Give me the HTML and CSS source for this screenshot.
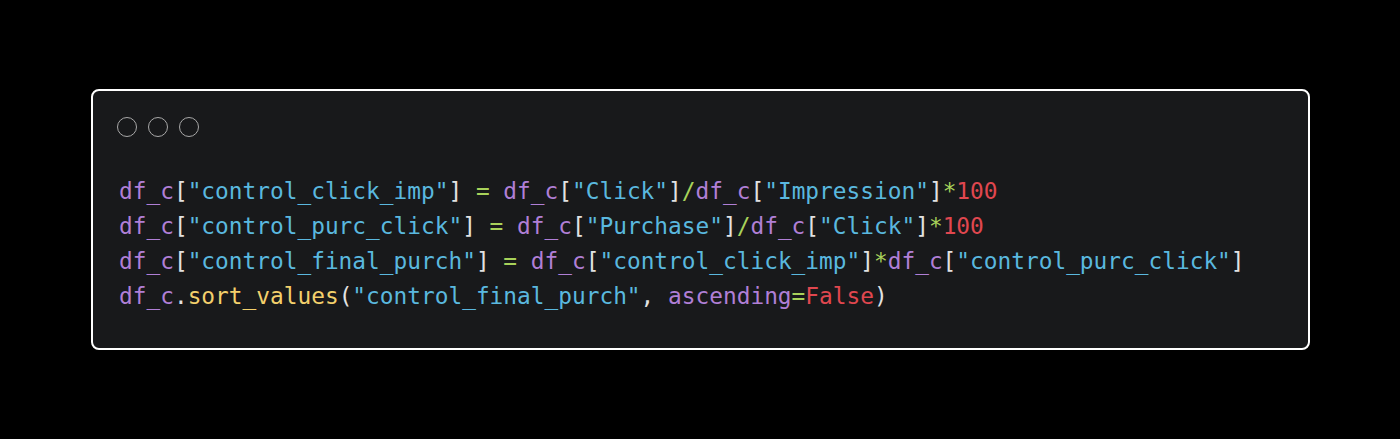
FILE: index.html
```html
<!DOCTYPE html>
<html>
<head>
<meta charset="utf-8">
<link rel="stylesheet" href="styles.css">
</head>
<body>
<div class="page">
  <div class="window">
    <div class="dots">
      <span class="dot"></span><span class="dot"></span><span class="dot"></span>
    </div>
    <pre class="code"><span class="v">df_c</span><span class="p">[</span><span class="s">"control_click_imp"</span><span class="p">]</span> <span class="o">=</span> <span class="v">df_c</span><span class="p">[</span><span class="s">"Click"</span><span class="p">]</span><span class="o">/</span><span class="v">df_c</span><span class="p">[</span><span class="s">"Impression"</span><span class="p">]</span><span class="o">*</span><span class="n">100</span>
<span class="v">df_c</span><span class="p">[</span><span class="s">"control_purc_click"</span><span class="p">]</span> <span class="o">=</span> <span class="v">df_c</span><span class="p">[</span><span class="s">"Purchase"</span><span class="p">]</span><span class="o">/</span><span class="v">df_c</span><span class="p">[</span><span class="s">"Click"</span><span class="p">]</span><span class="o">*</span><span class="n">100</span>
<span class="v">df_c</span><span class="p">[</span><span class="s">"control_final_purch"</span><span class="p">]</span> <span class="o">=</span> <span class="v">df_c</span><span class="p">[</span><span class="s">"control_click_imp"</span><span class="p">]</span><span class="o">*</span><span class="v">df_c</span><span class="p">[</span><span class="s">"control_purc_click"</span><span class="p">]</span>
<span class="v">df_c</span><span class="p">.</span><span class="f">sort_values</span><span class="p">(</span><span class="s">"control_final_purch"</span><span class="p">,</span> <span class="v">ascending</span><span class="o">=</span><span class="n">False</span><span class="p">)</span></pre>
  </div>
</div>
</body>
</html>
```
FILE: styles.css
```css
html, body {
  margin: 0;
  padding: 0;
  background: #000000;
}
.page {
  width: 1400px;
  height: 439px;
  box-sizing: border-box;
  padding: 89px 90px 0 91px;
}
.window {
  box-sizing: border-box;
  width: 1219px;
  height: 261px;
  border: 2px solid #ffffff;
  border-radius: 8px;
  background: #18191b;
  padding: 26px 26px 0 24px;
}
.dots {
  display: flex;
  gap: 11px;
  height: 20px;
}
.dot {
  box-sizing: border-box;
  width: 20px;
  height: 20px;
  border: 1.5px solid #a8a8a8;
  border-radius: 50%;
}
.code {
  margin: 37px 0 0 2px;
  font-family: "DejaVu Sans Mono", "Liberation Mono", monospace;
  font-size: 22.8px;
  line-height: 35px;
  color: #dcdcdc;
  white-space: pre;
}
.v { color: #b07fd6; }
.s { color: #5ab8df; }
.p { color: #e2e2e2; }
.o { color: #a8d25a; }
.n { color: #e0474f; }
.f { color: #f3d06c; }
```
